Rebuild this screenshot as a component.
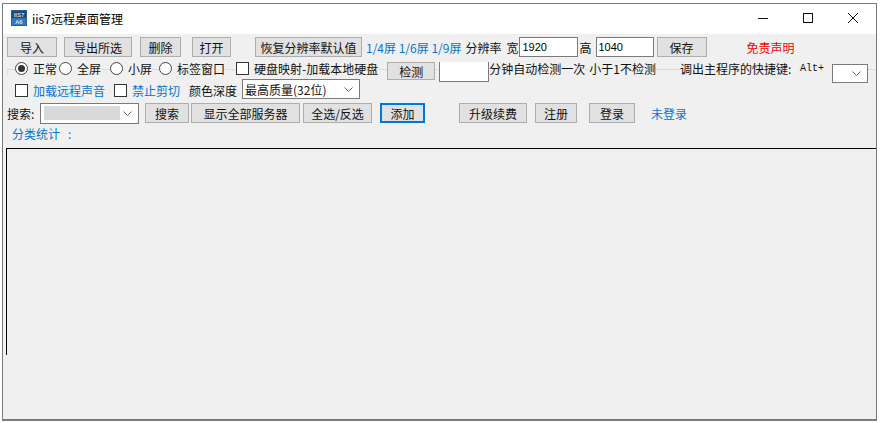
<div class="window">
  <header class="titlebar">
    <svg class="logo" width="16" height="16" viewBox="0 0 16 16">
      <rect width="16" height="16" fill="#2c5f94" />
      <rect x="1" y="1" width="14" height="7" fill="#1d4a7c" />
      <rect x="1" y="8" width="14" height="7" fill="#2f78c4" />
      <text x="8" y="7" class="logo-text">IIS7</text>
      <text x="8" y="14" class="logo-text">A6</text>
    </svg>
    <span class="title">iis7远程桌面管理</span>
    <div class="controls">
      <svg width="12" height="12" viewBox="0 0 12 12"><path d="M1 6.500h10" stroke="#111" /></svg>
      <svg width="12" height="12" viewBox="0 0 12 12"><rect x="1.500" y="1.500" width="9" height="9" fill="none" stroke="#111" /></svg>
      <svg width="12" height="12" viewBox="0 0 12 12"><path d="M1 1l10 10M11 1L1 11" stroke="#111" /></svg>
    </div>
  </header>

  <main class="body">
    <div class="row row1">
      <button class="w50">导入</button>
      <button class="w68 ml7">导出所选</button>
      <button class="w41 ml8">删除</button>
      <button class="w39 ml11">打开</button>
      <button class="w107 ml24">恢复分辨率默认值</button>
      <span class="blue ratio">1/4屏 1/6屏 1/9屏</span>
      <span class="res">分辨率</span>
      <span class="kuan">宽</span>
      <input class="num" value="1920" />
      <span class="gao">高</span>
      <input class="num h" value="1040" />
      <button class="w50 ml3">保存</button>
      <span class="red">免责声明</span>
    </div>

    <div class="row row2">
      <label class="opt first"><span class="radio on"></span>正常</label>
      <label class="opt ml2"><span class="radio"></span>全屏</label>
      <label class="opt ml9"><span class="radio"></span>小屏</label>
      <label class="opt ml7"><span class="radio"></span>标签窗口</label>
      <label class="opt ml11"><span class="check"></span>硬盘映射-加载本地硬盘</label>
      <button class="detect">检测</button>
      <input class="mins" />
      <span class="plain auto">分钟自动检测一次</span>
      <span class="plain less">小于1不检测</span>
      <span class="plain hotkey">调出主程序的快捷键:</span>
      <span class="plain alt">Alt+</span>
      <span class="combo small"><svg width="9" height="5" viewBox="0 0 9 5"><path d="M.5.500l4 4 4-4" fill="none" stroke="#666" /></svg></span>
    </div>

    <div class="row row3">
      <label class="opt blue"><span class="check"></span>加载远程声音</label>
      <label class="opt blue ml9"><span class="check"></span>禁止剪切</label>
      <span class="plain depth">颜色深度</span>
      <span class="combo quality">最高质量(32位)<svg width="9" height="5" viewBox="0 0 9 5"><path d="M.5.500l4 4 4-4" fill="none" stroke="#666" /></svg></span>
    </div>

    <div class="row row4">
      <span class="plain search-label">搜索:</span>
      <span class="combo search"><i></i><svg width="9" height="5" viewBox="0 0 9 5"><path d="M.5.500l4 4 4-4" fill="none" stroke="#666" /></svg></span>
      <button class="w44 ml6">搜索</button>
      <button class="w109 ml2">显示全部服务器</button>
      <button class="w69 ml3">全选/反选</button>
      <button class="w45 ml8 active">添加</button>
      <button class="w68 ml34">升级续费</button>
      <button class="w42 ml8">注册</button>
      <button class="w46 ml12">登录</button>
      <span class="blue ml16">未登录</span>
    </div>

    <div class="stats blue">分类统计&nbsp;&nbsp;&nbsp;:</div>
    <div class="list"></div>
  </main>
</div>

<style>
  :global(body) {
    margin: 0;
    background: #fff;
  }

  .window {
    box-sizing: border-box;
    width: 875px;
    height: 418px;
    margin: 3px 0 0 2px;
    border: 1px solid #7a7a7a;
    border-width: 1px 1px 2px 1px;
    background: #f0f0f0;
    display: flex;
    flex-direction: column;
    font-family: "Noto Sans CJK SC", "Liberation Sans", sans-serif;
    font-size: 12px;
    color: #111;
  }

  .titlebar {
    box-sizing: border-box;
    height: 30px;
    background: #fff;
    display: flex;
    align-items: center;
    padding: 0 0 2px 8px;
    flex: none;
  }

  .logo-text {
    font-family: "Liberation Sans", sans-serif;
    font-size: 6px;
    fill: #fff;
    text-anchor: middle;
  }

  .title {
    margin-left: 5px;
    color: #000;
  }

  .controls {
    margin-left: auto;
    display: flex;
    gap: 33px;
    padding-right: 17px;
  }

  .body {
    flex: 1;
    padding: 3px 0 0 4px;
    display: flex;
    flex-direction: column;
    min-height: 0;
  }

  .row {
    display: flex;
    align-items: center;
    white-space: nowrap;
  }

  .row1 {
    height: 20px;
  }

  .row2 {
    height: 22px;
    background:
      linear-gradient(#dcdcdc, #dcdcdc) 0 12px / 100% 1px no-repeat,
      linear-gradient(#dcdcdc, #dcdcdc) 0 12px / 1px 6px no-repeat;
  }

  .row3 {
    height: 22px;
    padding-left: 8px;
  }

  .row4 {
    height: 22px;
    margin-top: 1px;
  }

  button {
    box-sizing: border-box;
    height: 20px;
    padding: 0;
    border: 1px solid #adadad;
    background: #e1e1e1;
    font: inherit;
    color: #111;
    flex: none;
  }

  button.active {
    border: 2px solid #0078d7;
  }

  .w39 { width: 39px; }
  .w41 { width: 41px; }
  .w42 { width: 42px; }
  .w44 { width: 44px; }
  .w45 { width: 45px; }
  .w46 { width: 46px; }
  .w50 { width: 50px; }
  .w68 { width: 68px; }
  .w69 { width: 69px; }
  .w107 { width: 107px; }
  .w109 { width: 109px; }
  .ml2 { margin-left: 2px; }
  .ml3 { margin-left: 3px; }
  .ml6 { margin-left: 6px; }
  .ml7 { margin-left: 7px; }
  .ml8 { margin-left: 8px; }
  .ml9 { margin-left: 9px; }
  .ml11 { margin-left: 11px; }
  .ml12 { margin-left: 12px; }
  .ml16 { margin-left: 16px; }
  .ml24 { margin-left: 24px; }
  .ml34 { margin-left: 34px; }

  .blue {
    color: #0675cf;
  }

  .red {
    color: #f00000;
    margin-left: 40px;
  }

  .ratio {
    margin-left: 4px;
  }

  .res {
    margin-left: 4px;
  }

  .kuan {
    margin-left: 5px;
  }

  .gao {
    margin-left: 1px;
  }

  input {
    box-sizing: border-box;
    border: 1px solid #7a7a7a;
    background: #fff;
    padding: 0 2px;
    font-family: "Liberation Sans", sans-serif;
    font-size: 11px;
    flex: none;
    outline: none;
  }

  .num {
    width: 59px;
    height: 20px;
    margin-left: 1px;
  }

  .num.h {
    width: 58px;
    margin-left: 4px;
  }

  .detect {
    width: 48px;
    height: 18px;
    margin-left: 9px;
    align-self: flex-start;
    margin-top: 5px;
  }

  .mins {
    width: 50px;
    height: 20px;
    margin-left: 4px;
    border-top: none;
    align-self: flex-start;
    margin-top: 5px;
  }

  .opt {
    display: inline-flex;
    align-items: center;
    gap: 5px;
    background: #f0f0f0;
  }

  .first {
    margin-left: 8px;
  }

  .radio {
    box-sizing: border-box;
    width: 13px;
    height: 13px;
    border: 1px solid #444;
    border-radius: 50%;
    background: #fff;
    display: inline-block;
    position: relative;
  }

  .radio.on::after {
    content: "";
    position: absolute;
    inset: 2px;
    border-radius: 50%;
    background: #333;
  }

  .check {
    box-sizing: border-box;
    width: 13px;
    height: 13px;
    border: 1px solid #333;
    background: #fff;
    display: inline-block;
  }

  .plain {
    background: #f0f0f0;
  }

  .less {
    margin-left: 4px;
  }

  .hotkey {
    margin-left: 24px;
    width: 119px;
  }

  .alt {
    font-family: "Liberation Mono", monospace;
    font-size: 10px;
    margin-left: 1px;
    padding-right: 8px;
  }

  .combo {
    box-sizing: border-box;
    display: inline-flex;
    align-items: center;
    justify-content: space-between;
    border: 1px solid #7a7a7a;
    background: #fff;
    height: 20px;
    flex: none;
    padding: 0 6px 0 2px;
  }

  .combo.small {
    width: 36px;
    justify-content: flex-end;
    align-self: flex-start;
    margin-top: 7px;
    height: 19px;
  }

  .depth {
    margin-left: 9px;
  }

  .quality {
    width: 118px;
    margin-left: 5px;
    align-self: flex-start;
  }

  .search-label {
    width: 33px;
  }

  .search {
    width: 99px;
    height: 21px;
  }

  .search i {
    display: block;
    width: 76px;
    height: 14px;
    background: #d9d9d9;
    margin-left: 1px;
  }

  .stats {
    margin-top: 1px;
    margin-left: 5px;
    height: 18px;
    line-height: 18px;
  }

  .list {
    margin: 5px 0 0 -1px;
    height: 206px;
    border-top: 1px solid #000;
    border-left: 1px solid #000;
    background: #f0f0f0;
  }
</style>
